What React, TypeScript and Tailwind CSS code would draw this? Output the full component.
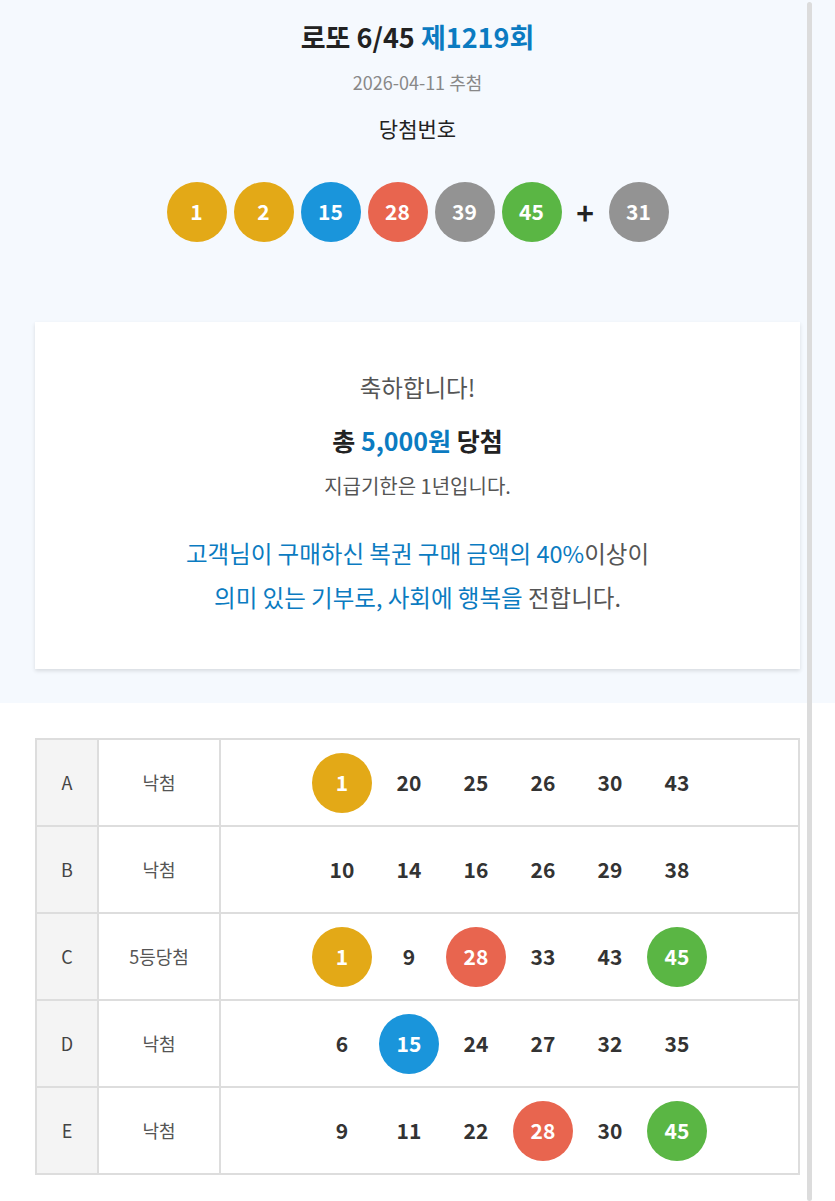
import React from "react";

type Color = "yellow" | "blue" | "red" | "gray" | "green";

const BALL_BG: Record<Color, string> = {
  yellow: "bg-[#e3a917]",
  blue: "bg-[#1a95db]",
  red: "bg-[#e8654f]",
  gray: "bg-[#939393]",
  green: "bg-[#5ab644]",
};

// 로또 공 색상 구간: 1~10 노랑, 11~20 파랑, 21~30 빨강, 31~40 회색, 41~45 초록
function ballColor(n: number): Color {
  if (n <= 10) return "yellow";
  if (n <= 20) return "blue";
  if (n <= 30) return "red";
  if (n <= 40) return "gray";
  return "green";
}

const WIN = [1, 2, 15, 28, 39, 45];
const BONUS = 31;

type Game = { slot: string; result: string; nums: number[] };

const GAMES: Game[] = [
  { slot: "A", result: "낙첨", nums: [1, 20, 25, 26, 30, 43] },
  { slot: "B", result: "낙첨", nums: [10, 14, 16, 26, 29, 38] },
  { slot: "C", result: "5등당첨", nums: [1, 9, 28, 33, 43, 45] },
  { slot: "D", result: "낙첨", nums: [6, 15, 24, 27, 32, 35] },
  { slot: "E", result: "낙첨", nums: [9, 11, 22, 28, 30, 45] },
];

function Ball({ n, hit = true }: { n: number; hit?: boolean }) {
  return (
    <span
      className={`flex h-[60px] w-[60px] shrink-0 items-center justify-center rounded-full text-[21px] font-bold ${
        hit ? `${BALL_BG[ballColor(n)]} text-white` : "text-[#333333]"
      }`}
    >
      {n}
    </span>
  );
}

export default function App() {
  return (
    <div className="relative min-h-screen bg-white font-['Noto_Sans_CJK_KR','Noto_Sans',sans-serif] text-[#333333]">
      <section className="bg-[#f5f9fe] px-[35px] pt-[19px] pb-[34px] text-center">
        <h1 className="text-[27px] font-bold leading-[36px] text-[#222222]">
          로또 6/45 <span className="text-[#0b7bc1]">제1219회</span>
        </h1>
        <p className="mt-[15px] text-[18px] leading-[24px] text-[#888888]">2026-04-11 추첨</p>
        <p className="mt-[20px] text-[21px] leading-[28px] text-[#222222]">당첨번호</p>

        <div className="mt-[40px] flex items-center justify-center">
          {WIN.map((n, i) => (
            <span key={n} className={i === 0 ? "" : "ml-[7px]"}>
              <Ball n={n} />
            </span>
          ))}
          <span className="flex w-[47px] justify-center text-[30px] font-bold leading-none text-[#222222]">+</span>
          <Ball n={BONUS} />
        </div>

        <div className="mt-[80px] bg-white pt-[49px] pb-[50px] shadow-[0_2px_4px_rgba(0,0,0,0.12)]">
          <p className="text-[23.5px] leading-[32px] text-[#555555]">축하합니다!</p>
          <p className="mt-[19px] text-[25px] font-bold leading-[36px] text-[#222222]">
            총 <span className="text-[#0b7bc1]">5,000원</span> 당첨
          </p>
          <p className="mt-[14px] text-[20px] leading-[28px] text-[#555555]">지급기한은 1년입니다.</p>
          <p className="mt-[31px] text-[23.5px] leading-[44px] text-[#0b7bc1]">
            고객님이 구매하신 복권 구매 금액의 40%<span className="text-[#555555]">이상이</span>
            <br />
            의미 있는 기부로, 사회에 행복을 <span className="text-[#555555]">전합니다.</span>
          </p>
        </div>
      </section>

      <section className="px-[35px] pt-[35px] pb-[27px]">
        <table className="w-full border-collapse">
          <tbody>
            {GAMES.map((g) => (
              <tr key={g.slot}>
                <td className="h-[87px] w-[62px] border-2 border-[#dddddd] bg-[#f4f4f4] text-center text-[18px] text-[#444444]">
                  {g.slot}
                </td>
                <td className="w-[122px] border-2 border-[#dddddd] text-center text-[18px] text-[#555555]">
                  {g.result}
                </td>
                <td className="border-2 border-[#dddddd]">
                  <div className="flex items-center justify-center gap-[7px]">
                    {g.nums.map((n) => (
                      <Ball key={n} n={n} hit={WIN.includes(n)} />
                    ))}
                  </div>
                </td>
              </tr>
            ))}
          </tbody>
        </table>
      </section>

      {/* 모바일 스크롤바 */}
      <div className="pointer-events-none fixed top-[2px] bottom-0 right-[23px] w-[5px] rounded-full bg-[#dcdcdc]" />
    </div>
  );
}
